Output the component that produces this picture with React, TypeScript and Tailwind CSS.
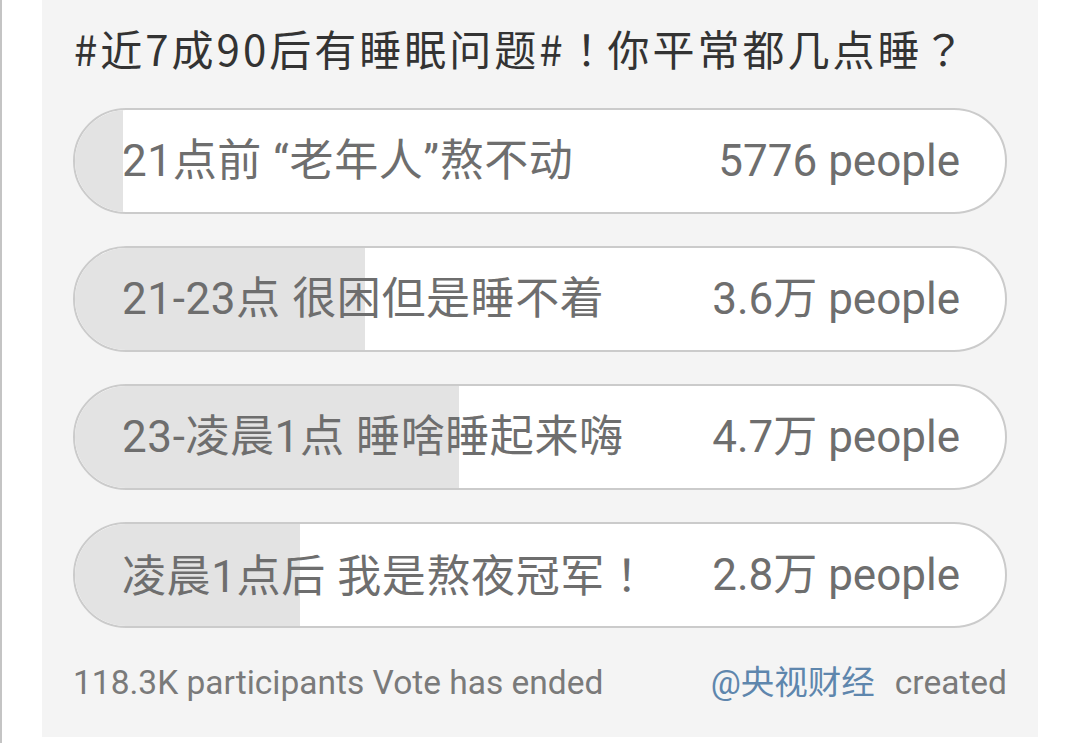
const OPTIONS = [
  { label: '21点前 “老年人”熬不动', count: '5776 people', fill: 48 },
  { label: '21-23点 很困但是睡不着', count: '3.6万 people', fill: 290 },
  { label: '23-凌晨1点 睡啥睡起来嗨', count: '4.7万 people', fill: 384 },
  { label: '凌晨1点后 我是熬夜冠军！', count: '2.8万 people', fill: 225 },
];

// full-width punctuation gets squeezed by the browser, keep it one em wide and centred
function Cjk({ text }: { text: string }) {
  return (
    <>
      {text.split(/([！？])/).map((part, i) =>
        part === '！' || part === '？' ? (
          <span key={i} className="inline-block w-[1em] text-center font-['Noto_Sans_CJK_TC',sans-serif]">{part}</span>
        ) : (
          <span key={i}>{part}</span>
        )
      )}
    </>
  );
}

function Option({ label, count, fill }: { label: string; count: string; fill: number }) {
  return (
    <div className="relative h-[106px] rounded-full border-2 border-[#cbcbcb] bg-white overflow-hidden">
      {/* vote share */}
      <div className="absolute inset-y-0 left-0 bg-[#e3e3e3]" style={{ width: fill }} />
      <div className="relative flex h-full items-center justify-between pl-[47px] pr-[45px] text-[44px] text-[#6e6e6e]">
        <span className="tracking-[0.6px]"><Cjk text={label} /></span>
        <span>{count}</span>
      </div>
    </div>
  );
}

export default function App() {
  return (
    <div className="flex h-[743px] w-[1080px] border-l-2 border-[#c4c4c4] bg-white font-['Roboto','Noto_Sans_CJK_SC',sans-serif]">
      <div className="ml-[40px] flex h-[737px] w-[996px] flex-col bg-[#f4f4f4] px-[31px]">
        <h1 className="h-[96px] pl-[1px] font-['Noto_Sans_CJK_SC',sans-serif] text-[42px] leading-[96px] tracking-[3px] text-[#333333]">
          <Cjk text="#近7成90后有睡眠问题#！你平常都几点睡？" />
        </h1>
        <div className="mt-[12px] flex flex-col gap-[32px]">
          {OPTIONS.map(o => (
            <Option key={o.label} {...o} />
          ))}
        </div>
        <div className="mt-[30px] flex items-center justify-between text-[33.5px] text-[#7a7a7a]">
          <span>118.3K participants Vote has ended</span>
          <span>
            <span className="text-[#5e86ad]">@央视财经</span>
            <span className="ml-[20px]">created</span>
          </span>
        </div>
      </div>
    </div>
  );
}
